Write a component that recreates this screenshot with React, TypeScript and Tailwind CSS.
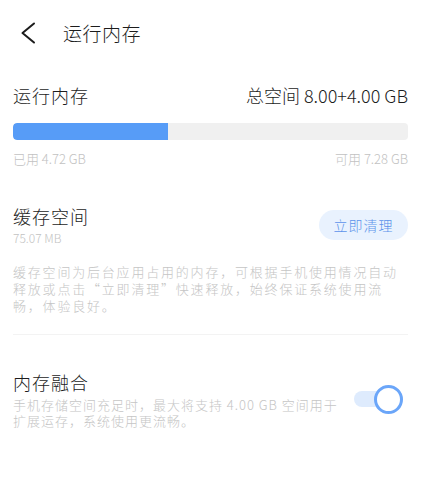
import { useState } from "react";

export default function App() {
  const [fusion, setFusion] = useState(true);
  const used = 4.72;
  const total = 12;

  return (
    <div className="w-[431px] h-[500px] bg-white text-[#1c1c1c] font-['Noto_Sans_CJK_SC',sans-serif] font-light overflow-hidden">
      {/* Header */}
      <div className="h-[66px] flex items-center pl-[20px]">
        <svg width="16" height="22" viewBox="0 0 16 22" fill="none" className="shrink-0">
          <path d="M14 1.5 L2.5 11 L14 20.5" stroke="#1c1c1c" strokeWidth="2" strokeLinecap="round" strokeLinejoin="round" />
        </svg>
        <h1 className="ml-[27px] text-[19px] leading-[26px] tracking-[0.5px]">运行内存</h1>
      </div>

      <div className="pl-[13px] pr-[23px]">
        {/* RAM usage */}
        <div className="mt-[16px] flex items-center justify-between leading-[27px]">
          <span className="text-[18px] tracking-[1px]">运行内存</span>
          <span className="text-[18px]">总空间 8.00+4.00 GB</span>
        </div>
        <div className="mt-[14px] h-[17px] rounded-[4px] bg-[#f0f0f0] overflow-hidden">
          <div className="h-full bg-[#579cf7] rounded-l-[4px]" style={{ width: `${(used / total) * 100}%` }} />
        </div>
        <div className="mt-[10px] flex justify-between text-[13px] leading-[18px] text-[#c2c2c2]">
          <span>已用 4.72 GB</span>
          <span>可用 7.28 GB</span>
        </div>

        {/* Cache */}
        <div className="mt-[35px] flex items-center justify-between">
          <div>
            <div className="text-[18px] leading-[26px] tracking-[1px]">缓存空间</div>
            <div className="text-[12px] leading-[18px] text-[#c2c2c2]">75.07 MB</div>
          </div>
          <button className="w-[89px] h-[30px] rounded-full bg-[#e9f2fe] text-[#5c92ea] text-[14px] tracking-[1px]">
            立即清理
          </button>
        </div>
        <p className="mt-[16px] text-[13px] leading-[17px] tracking-[1.8px] text-[#c5c5c5]">
          缓存空间为后台应用占用的内存，可根据手机使用情况自动释放或点击“立即清理”快速释放，始终保证系统使用流畅，体验良好。
        </p>

        <div className="mt-[20px] h-px bg-[#f3f3f3]" />

        {/* Memory fusion */}
        <div className="mt-[34px] flex items-center gap-[8px]">
          <div className="flex-1">
            <div className="text-[18px] leading-[26px] tracking-[1px]">内存融合</div>
            <p className="mt-[2px] text-[13px] leading-[16px] tracking-[1px] text-[#c5c5c5]">
              手机存储空间充足时，最大将支持 4.00 GB 空间用于扩展运存，系统使用更流畅。
            </p>
          </div>
          <button
            onClick={() => setFusion(!fusion)}
            className="relative w-[49px] h-[29px] mr-[5px] shrink-0"
            aria-label="内存融合"
          >
            <span className="absolute left-0 top-[6px] w-[40px] h-[16px] rounded-full bg-[#deebfd]" />
            <span
              className={`absolute top-0 w-[29px] h-[29px] rounded-full bg-white border-[3.5px] ${
                fusion ? "right-0 border-[#6ba6f9]" : "left-0 border-[#d0d0d0]"
              }`}
            />
          </button>
        </div>
      </div>
    </div>
  );
}
